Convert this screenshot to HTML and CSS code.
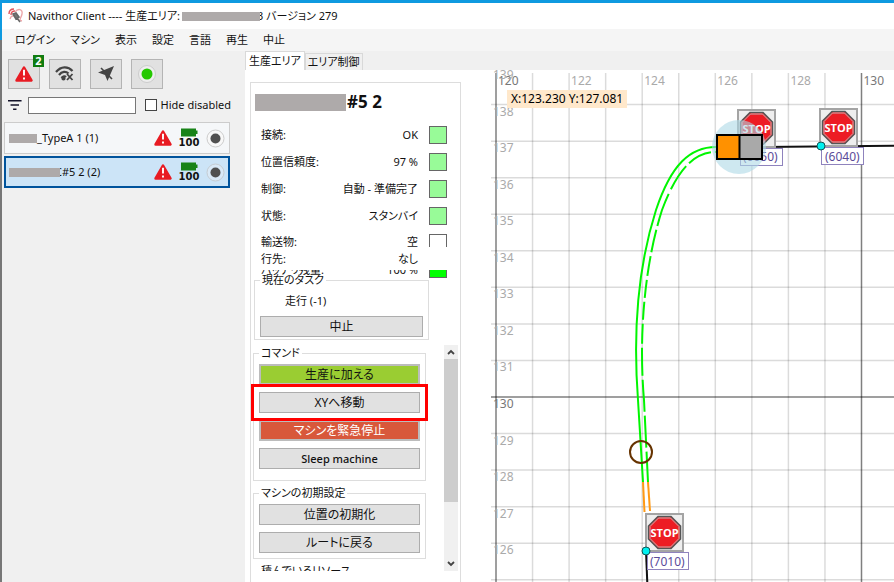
FILE: index.html
```html
<!DOCTYPE html>
<html lang="ja">
<head>
<meta charset="utf-8">
<title>Navithor Client</title>
<link rel="stylesheet" href="styles.css">
</head>
<body>
<svg class="defs" aria-hidden="true">
  <symbol id="warning" viewBox="0 0 18 16">
    <path d="M9 1.6 16.4 14.4H1.6Z" fill="#e81b23" stroke="#e81b23" stroke-width="2.6" stroke-linejoin="round"/>
    <path d="M9 3.8V9.6M9 11.4V13.4" stroke="#fff" stroke-width="1.9"/>
  </symbol>
  <symbol id="battery" viewBox="0 0 17 9">
    <path d="M0 .5H15V2.5H16.500V6H15V8.500H0Z" fill="#188318"/>
  </symbol>
  <symbol id="stop" viewBox="0 0 39 39">
    <rect x="1" y="1" width="37" height="37" fill="#eee" stroke="#a4a4a4" stroke-width="2"/>
    <path d="M13 3.500H26L35.500 13V26L26 35.500H13L3.500 26V13Z" fill="#ed1c24" stroke="#555" stroke-width="1.500"/>
    <path d="M13.500 5H25.500L34 13.500V25.500L25.500 34H13.500L5 25.500V13.500Z" fill="none" stroke="#c9b0b0" stroke-width="1"/>
    <text x="19.500" y="24" text-anchor="middle" class="stop-text">STOP</text>
  </symbol>
</svg>
<div class="window">
  <header class="titlebar">
    <svg class="app-icon" viewBox="0 0 16 16" fill="none">
      <path d="M1 6C1 3 3 1 6 1M3 7C3 4.500 4.500 3 7 3" stroke="#e0555c" stroke-width="1.400"/>
      <path d="M7 4C10 0 15 1 14 6S10 12 14 13M2 11C3 7 7 7 8 10" stroke="#eba5a8" stroke-width="1.300"/>
      <path d="M5 6 8 5 11 9 8 11ZM9 10 12 14" fill="#777" stroke="#666" stroke-width="1.600"/>
    </svg>
    <span>Navithor Client ---- 生産エリア:</span>
    <span class="mask mask-title"></span><span>3 バージョン 279</span>
  </header>
  <nav class="menubar">
    <button>ログイン</button><button>マシン</button><button>表示</button><button>設定</button><button>言語</button><button>再生</button><button>中止</button>
  </nav>
  <div class="workspace">
    <aside class="sidebar">
      <div class="toolbar">
        <button class="tool" aria-label="Alarms"><svg width="18" height="16"><use href="#warning"/></svg><span class="badge">2</span></button>
        <button class="tool" aria-label="Connection"><svg width="20" height="16" viewBox="0 0 20 16" fill="none" stroke="#444" stroke-width="2.200"><path d="M1 6C6 0 13 0 17.500 5M4 9C7 5 11 5 13.500 7.500M6.500 12C8 10 10 10 11 11"/><circle cx="8.500" cy="12.500" r="1" fill="#444"/><path d="M12 8 17.500 14M17.500 8 12 14" stroke-width="1.800"/></svg></button>
        <button class="tool" aria-label="Navigation"><svg width="18" height="18" viewBox="0 0 18 18"><path d="M17 1 10.500 16 8 10 1 7.500Z" fill="#444"/><path d="M4 3 15 14" stroke="#444" stroke-width="1.600"/></svg></button>
        <button class="tool" aria-label="Status"><svg width="20" height="20" viewBox="0 0 20 20"><circle cx="10" cy="10" r="8.500" fill="#eee" stroke="#ccc"/><circle cx="10" cy="10" r="5.500" fill="#24c800"/></svg></button>
      </div>
      <div class="filter">
        <svg width="16" height="12" viewBox="0 0 16 12" stroke="#111128" stroke-width="2"><path d="M0 1H16M3 6H13M6 11H10"/></svg>
        <input type="text" class="filter-text" aria-label="Filter">
        <label class="check"><input type="checkbox">Hide disabled</label>
      </div>
      <div class="machines">
        <button class="machine"><span class="mask mask-a"></span><span class="name">_TypeA 1 (1)</span>
          <svg class="warn" width="18" height="16"><use href="#warning"/></svg>
          <span class="charge"><svg width="17" height="9"><use href="#battery"/></svg>100</span>
          <svg width="19" height="19" viewBox="0 0 19 19"><circle cx="9.500" cy="9.500" r="8.500" fill="#f8f8f8" stroke="#ccc"/><circle cx="9.500" cy="9.500" r="5" fill="#505050"/></svg></button>
        <button class="machine selected"><span class="mask mask-b"></span><span class="name">C#5 2 (2)</span>
          <svg class="warn" width="18" height="16"><use href="#warning"/></svg>
          <span class="charge"><svg width="17" height="9"><use href="#battery"/></svg>100</span>
          <svg width="19" height="19" viewBox="0 0 19 19"><circle cx="9.500" cy="9.500" r="8.500" fill="#d9e9f7" stroke="#c5ccd2"/><circle cx="9.500" cy="9.500" r="5" fill="#505050"/></svg></button>
      </div>
    </aside>
    <main class="main">
      <div class="tabs"><button class="tab active">生産エリア</button><button class="tab">エリア制御</button></div>
      <div class="area">
        <section class="details">
          <h1><span class="mask mask-h"></span>#5 2</h1>
          <dl class="status">
            <div class="row"><dt>接続:</dt><dd>OK</dd><i class="lamp"></i></div>
            <div class="row"><dt>位置信頼度:</dt><dd>97 %</dd><i class="lamp"></i></div>
            <div class="row"><dt>制御:</dt><dd>自動 - 準備完了</dd><i class="lamp"></i></div>
            <div class="row"><dt>状態:</dt><dd>スタンバイ</dd><i class="lamp"></i></div>
            <div class="row cut"><dt>輸送物:</dt><dd>空</dd><i class="lamp empty"></i></div>
            <div class="row plain"><dt>行先:</dt><dd>なし</dd><i class="lamp none"></i></div>
            <div class="row tail"><dt>バッテリ残量:</dt><dd>100 %</dd><i class="lamp full"></i></div>
          </dl>
          <fieldset class="group task"><legend>現在のタスク</legend><p>走行 (-1)</p><button class="command">中止</button></fieldset>
          <div class="scroller">
            <div class="groups">
              <fieldset class="group commands"><legend>コマンド</legend>
                <button class="command go">生産に加える</button>
                <button class="command marked">XYへ移動</button>
                <button class="command halt">マシンを緊急停止</button>
                <button class="command latin">Sleep machine</button>
              </fieldset>
              <fieldset class="group"><legend>マシンの初期設定</legend>
                <button class="command">位置の初期化</button>
                <button class="command">ルートに戻る</button>
              </fieldset>
              <fieldset class="group"><legend>積んでいるリソース</legend></fieldset>
            </div>
            <div class="scrollbar">
              <svg viewBox="0 0 14 14"><path d="M4 9 7 6 10 9" fill="none" stroke="#444" stroke-width="1.800"/></svg>
              <span class="thumb"></span>
              <svg class="down" viewBox="0 0 14 14"><path d="M4 5 7 8 10 5" fill="none" stroke="#444" stroke-width="1.800"/></svg>
            </div>
          </div>
        </section>
        <svg class="map" role="img" aria-label="生産エリア">
          <g transform="translate(-461 -70)">
            <g class="grid" id="grid"></g>
            <g class="labels" id="labels"></g>
            <path d="M762 147 2000 136" stroke="#111" stroke-width="2"/>
            <path d="M646 551 648 600" stroke="#111" stroke-width="2"/>
            <g class="route">
              <path d="M718 147C690 146 671 165 656 210C640 260 632 320 638 400L643 482"/>
              <path d="M718 152C694 151 677 170 662 210C646 260 638 330 644 400L648 482" class="lane"/>
              <path d="M643 482 644.500 512" class="slow"/>
              <path d="M648 482 650 511" class="slow"/>
            </g>
            <circle cx="641" cy="452" r="11" fill="none" stroke="#663300" stroke-width="2"/>
            <use href="#stop" x="737" y="109" width="39" height="39"/>
            <use href="#stop" x="819" y="108" width="39" height="39"/>
            <use href="#stop" x="645" y="513" width="39" height="39"/>
            <g class="tag"><rect x="740.500" y="148.500" width="42" height="17"/><text x="743" y="161">(6050)</text>
            <rect x="821.500" y="147.500" width="42" height="17"/><text x="825" y="161">(6040)</text>
            <rect x="647.500" y="552.500" width="41" height="17"/><text x="650" y="566">(7010)</text></g>
            <circle cx="739" cy="147" r="27" fill="#add8e6" fill-opacity=".6"/>
            <path d="M717 135H739V159H717Z" fill="#ff9100"/><path d="M739 135H761V159H739Z" fill="#a9a9a9"/>
            <path d="M717 135H762V159H717ZM739.500 135V159" fill="none" stroke="#000" stroke-width="2"/>
            <g fill="#00f0f0" stroke="#155" stroke-width="1"><circle cx="821" cy="146" r="4"/><circle cx="646" cy="551" r="4"/></g>
            <rect x="507" y="90" width="120" height="18" fill="#ffe8cb"/>
            <text x="511" y="103" class="coords">X:123.230 Y:127.081</text>
          </g>
        </svg>
      </div>
    </main>
  </div>
</div>
<script src="map.js"></script>
</body>
</html>
```
FILE: map.js
```js
const step = 36.55;
const grid = document.getElementById('grid');
const labels = document.getElementById('labels');
let lines = '';
let text = '';
for (let i = 0; i < 50; i++) {
  const x = 496 + i * step;
  const major = i % 10 === 0 ? ' class="major"' : '';
  lines += `<path${major} d="M${x} 73V3000"/>`;
  if (i % 2 === 0) {
    text += `<text${major} x="${x + 2}" y="85">${120 + i}</text>`;
  }
}
for (let v = 139; v > 70; v--) {
  const y = 397 + (130 - v) * step;
  const major = v % 10 === 0 ? ' class="major"' : '';
  if (v < 139) {
    lines += `<path${major} d="M491 ${y}H3000"/>`;
  }
  text += `<text${major} x="493" y="${y + 11}">${v}</text>`;
}
grid.innerHTML = lines;
labels.innerHTML = text;
```
FILE: styles.css
```css
* { box-sizing: border-box; }
body {
  margin: 0;
  background: linear-gradient(#0f9ae0 0 40px, #777 40px);
  color: #111;
  font: 11px/16px "Noto Sans", "Noto Sans CJK JP", sans-serif;
  font-feature-settings: "palt";
}
button, input { font: inherit; font-feature-settings: inherit; color: inherit; }
button { padding: 0; border: 0; background: none; }
.defs { position: absolute; width: 0; height: 0; }
.window {
  display: flex;
  flex-direction: column;
  height: 100vh;
  padding: 3px 0 0 2px;
}
.titlebar {
  display: flex;
  align-items: center;
  height: 26px;
  padding-left: 6px;
  background: #fff;
}
.app-icon { width: 16px; height: 16px; margin-right: 4px; }
.mask { display: inline-block; flex: none; position: relative; background: #aeaaaa; }
.mask-title { width: 78px; height: 9px; margin: 0 -3px 0 2px; }
.mask-a { width: 28px; height: 9px; }
.mask-b { width: 51px; height: 9px; margin-right: -5px; }
.mask-h { width: 91px; height: 17px; margin-right: 1px; }
.menubar { display: flex; gap: 15px; height: 22px; padding-left: 13px; background: #f5f5f5; }
.workspace { display: flex; flex: 1; min-height: 0; background: #f0f0f0; }
.sidebar { width: 243px; flex: none; padding: 8px 14px 0 2px; }
.toolbar { display: flex; gap: 9px; padding-left: 4px; }
.tool {
  position: relative;
  display: grid;
  place-items: center;
  width: 32px;
  height: 30px;
  border: 1px solid #b4b4b4;
  background: #e1e1e1;
}
.badge {
  position: absolute;
  top: -5px;
  right: -5px;
  width: 11px;
  height: 12px;
  background: #107c10;
  color: #fff;
  font-weight: bold;
  line-height: 12px;
}
.filter { display: flex; align-items: center; height: 18px; margin: 7px 0 8px; padding-left: 4px; }
.filter-text { width: 108px; height: 17px; margin-left: 6px; border: 1px solid #777; background: #fff; }
.check { display: flex; align-items: center; gap: 4px; margin-left: 9px; white-space: nowrap; }
.check input { appearance: none; width: 12px; height: 12px; margin: 0; border: 1px solid #444; background: #fff; }
.machines { display: flex; flex-direction: column; gap: 2px; margin-right: 1px; }
.machine {
  display: flex;
  align-items: center;
  height: 32px;
  padding: 0 4px;
  border: 1px solid #ccc;
  background: #f5f7f9;
}
.machine.selected { border: 2px solid #00539c; padding: 0 3px; background: #cce4f7; }
.warn { margin-left: auto; }
.charge { display: flex; flex-direction: column; align-items: center; width: 34px; font: bold 10px/11px "DejaVu Sans", sans-serif; }
.main { display: flex; flex: 1; flex-direction: column; min-width: 0; }
.tabs { display: flex; align-items: flex-end; height: 19px; }
.tab { height: 17px; padding: 0 2px; border: 1px solid #d9d9d9; border-bottom: 0; background: #f0f0f0; }
.tab.active { height: 19px; padding: 0 3px; background: #fff; }
.area { display: flex; flex: 1; min-height: 0; background: #fff; }
.details {
  display: flex;
  flex-direction: column;
  width: 211px;
  flex: none;
  margin: 12px 0 0 5px;
  padding: 0 2px 11px;
  border: 1px solid #ddd;
  border-bottom: 0;
}
h1 { display: flex; align-items: center; height: 38px; margin: 0; padding-left: 2px; font-size: 17px; }
.status { margin: 0; padding: 0 11px 0 8px; }
.row { display: flex; align-items: center; height: 27px; overflow: hidden; }
dd { margin: 0 11px 0 auto; }
.lamp { width: 18px; height: 18px; border: 1px solid #666; background: #98fb98; }
.row.cut { height: 18px; align-items: flex-start; padding-top: 5px; }
.cut .empty { flex: none; background: #fff; }
.row.plain { height: 23px; }
.lamp.none { visibility: hidden; }
.row.tail { height: 8px; align-items: flex-end; }
.lamp.full { background: #0f0; }
.group { min-width: 0; margin: 0; padding: 3px 5px 5px; border: 1px solid #ddd; }
.group legend { height: 16px; padding: 0 2px; }
.task { width: 175px; margin: -6px 0 0 1px; padding: 0 5px 2px; }
.task p { margin: 5px 0 7px 25px; }
.command {
  display: block;
  width: 100%;
  height: 21px;
  border: 1px solid #adadad;
  background: #e1e1e1;
  font-size: 12px;
  line-height: 18px;
}
.command + .command { margin-top: 7px; }
.go, .halt { border: 2px solid #bcbcbc; line-height: 16px; }
.go { background: #9acd32; }
.halt { background: #d8583b; color: #fff; }
.latin { font-size: 11px; font-weight: 500; }
.marked { position: relative; z-index: 1; }
.marked::after { content: ""; position: absolute; inset: -9px; border: 3px solid #f00; }
.scroller { display: flex; flex: 1; min-height: 0; margin: 5px 0 0 -2px; overflow: hidden; }
.groups { width: 175px; padding-left: 2px; }
.groups .group { margin-bottom: 4px; }
.commands { padding-bottom: 11px; }
.scrollbar { display: flex; flex-direction: column; width: 14px; margin-left: auto; background: #f0f0f0; }
.scrollbar svg { width: 14px; height: 14px; }
.thumb { height: 143px; background: #cdcdcd; }
.down { margin-top: auto; }
.map { display: block; flex: 1; min-width: 0; height: 100%; }
.grid path { stroke: #000; stroke-opacity: .14; stroke-width: 1.5px; }
.grid .major { stroke-opacity: .5; }
.labels { font-size: 12px; fill: #aaa; }
.labels .major { fill: #777; }
.coords { font-size: 12px; }
.route { fill: none; stroke: #00f500; stroke-width: 2px; }
.lane { stroke-dasharray: 3 4 25 4 28 5 34 4 23 4 20 4 18 4 18 4 20 4 28 4 32 4 32 4 32 4; }
.route .slow { stroke: #ff9914; }
.tag rect { fill: #fff; stroke: #8f83bd; }
.tag text { font-size: 12px; fill: #5a4b99; }
.stop-text { font: bold 11px "Open Sans", sans-serif; fill: #fff; }
```
